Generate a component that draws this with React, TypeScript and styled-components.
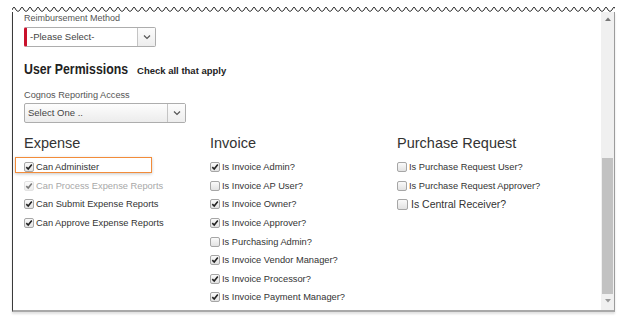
import React from "react";
import styled, { createGlobalStyle } from "styled-components";

const GlobalStyle = createGlobalStyle`
  html, body { margin: 0; padding: 0; background: #ffffff; }
  body { font-family: "Liberation Sans", Arial, sans-serif; color: #333; }
  * { box-sizing: border-box; }
`;

const Page = styled.div`
  width: 625px;
  height: 323px;
  padding: 4px 0 0 12px;
  overflow: hidden;
`;

const Frame = styled.div`
  width: 603px;
  display: flex;
  flex-direction: column;
`;

const WaveSvg = styled.svg`
  display: block;
  width: 603px;
  height: 8px;
`;

const Panel = styled.div`
  display: flex;
  height: 300px;
  border-left: 1px solid #3a3a3a;
  border-right: 1px solid #9c9c9c;
  border-bottom: 2px solid #a9a9a9;
  box-shadow: 0 2px 2px rgba(0, 0, 0, 0.12);
  background: #fff;
`;

const Content = styled.div`
  flex: 1;
  padding-left: 11px;
  overflow: hidden;
`;

const FieldLabel = styled.div<{ $size: number; $mt?: number }>`
  font-size: ${(p) => p.$size}px;
  line-height: 12px;
  color: #555;
  margin-top: ${(p) => p.$mt ?? 0}px;
  white-space: nowrap;
`;

const SelectBox = styled.div<{ $w: number; $required?: boolean; $mt: number }>`
  display: flex;
  width: ${(p) => p.$w}px;
  height: 20px;
  margin-top: ${(p) => p.$mt}px;
  border: 1px solid #adadad;
  border-left: ${(p) => (p.$required ? "3px solid #c9112c" : "1px solid #adadad")};
  border-radius: 2px;
  background: ${(p) =>
    p.$required ? "#ffffff" : "linear-gradient(#fdfdfd, #ececec)"};
`;

const SelectText = styled.div<{ $pad: number }>`
  flex: 1;
  padding-left: ${(p) => p.$pad}px;
  font-size: 9.5px;
  line-height: 18px;
  color: #444;
  white-space: nowrap;
`;

const SelectArrow = styled.div`
  width: 18px;
  border-left: 1px solid #c4c4c4;
  display: flex;
  align-items: center;
  justify-content: center;
  background: linear-gradient(#fcfcfc, #ededed);
`;

const HeadingRow = styled.div`
  display: flex;
  align-items: baseline;
  height: 18px;
  line-height: 18px;
  margin-top: 13px;
  white-space: nowrap;
`;

const Heading = styled.h2`
  display: inline-block;
  margin: 0 -22.7px 0 0;
  font-size: 15px;
  font-weight: bold;
  color: #222;
  transform: scaleX(0.821);
  transform-origin: left center;
`;

const HeadingNote = styled.span`
  margin-left: 9px;
  font-size: 9.5px;
  font-weight: bold;
  color: #222;
`;

const Columns = styled.div`
  display: grid;
  grid-template-columns: 186px 187px 1fr;
  margin-top: 11px;
`;

const Column = styled.div`
  display: flex;
  flex-direction: column;
`;

const ColumnTitle = styled.h3`
  margin: 0 0 6px 0;
  font-size: 14.5px;
  line-height: 18px;
  font-weight: normal;
  color: #333;
  white-space: nowrap;
`;

const Row = styled.div<{ $disabled?: boolean; $large?: boolean }>`
  position: relative;
  display: flex;
  align-items: center;
  gap: ${(p) => (p.$large ? 3 : 2)}px;
  height: 18.6px;
  font-size: ${(p) => (p.$large ? 10.5 : 9.3)}px;
  color: ${(p) => (p.$disabled ? "#a8a8a8" : "#333")};
  white-space: nowrap;
`;

const Box = styled.span<{ $disabled?: boolean; $large?: boolean }>`
  display: flex;
  align-items: center;
  justify-content: center;
  width: ${(p) => (p.$large ? 11 : 10)}px;
  height: ${(p) => (p.$large ? 11 : 10)}px;
  border: 1px solid ${(p) => (p.$disabled ? "#cfcfcf" : "#a6a6a6")};
  border-radius: 2px;
  background: linear-gradient(#fafafa, #e2e2e2);
  opacity: ${(p) => (p.$disabled ? 0.6 : 1)};
`;

const Highlight = styled.div`
  position: absolute;
  left: -9px;
  top: -1px;
  width: 137px;
  height: 16px;
  border: 1.5px solid #f28c3a;
  box-shadow: 0 1px 3px rgba(0, 0, 0, 0.22);
  pointer-events: none;
`;

const Scrollbar = styled.div`
  width: 13px;
  display: flex;
  flex-direction: column;
  background: #f0f0f0;
`;

const ScrollButton = styled.div`
  height: 14px;
  display: flex;
  align-items: center;
  justify-content: center;
`;

const TrackSpace = styled.div`
  height: 132px;
`;

const Thumb = styled.div`
  height: 136px;
  margin: 0 1px;
  background: #c2c2c2;
`;

type Item = { label: string; checked: boolean; disabled?: boolean; large?: boolean; highlight?: boolean };

const expense: Item[] = [
  { label: "Can Administer", checked: true, highlight: true },
  { label: "Can Process Expense Reports", checked: true, disabled: true },
  { label: "Can Submit Expense Reports", checked: true },
  { label: "Can Approve Expense Reports", checked: true },
];

const invoice: Item[] = [
  { label: "Is Invoice Admin?", checked: true },
  { label: "Is Invoice AP User?", checked: false },
  { label: "Is Invoice Owner?", checked: true },
  { label: "Is Invoice Approver?", checked: true },
  { label: "Is Purchasing Admin?", checked: false },
  { label: "Is Invoice Vendor Manager?", checked: true },
  { label: "Is Invoice Processor?", checked: true },
  { label: "Is Invoice Payment Manager?", checked: true },
];

const purchase: Item[] = [
  { label: "Is Purchase Request User?", checked: false },
  { label: "Is Purchase Request Approver?", checked: false },
  { label: "Is Central Receiver?", checked: false, large: true },
];

const wavePath = (() => {
  let d = "M0 6";
  for (let i = 0; i < 76; i++) d += " q2 -5.5 4 0 q2 3 4 0";
  return d;
})();

const Wave = () => (
  <WaveSvg viewBox="0 0 603 8" preserveAspectRatio="none">
    <path d={wavePath} fill="none" stroke="#333" strokeWidth="1" />
  </WaveSvg>
);

const Chevron = () => (
  <svg width="8" height="6" viewBox="0 0 8 6">
    <path d="M1 1.5 L4 4.5 L7 1.5" fill="none" stroke="#555" strokeWidth="1.2" />
  </svg>
);

const CheckMark = () => (
  <svg width="8" height="8" viewBox="0 0 8 8">
    <path d="M1.3 4.2 L3.2 6 L6.8 1.6" fill="none" stroke="#222" strokeWidth="1.6" />
  </svg>
);

const Check = ({ item }: { item: Item }) => (
  <Row $disabled={item.disabled} $large={item.large}>
    <Box $disabled={item.disabled} $large={item.large}>
      {item.checked && <CheckMark />}
    </Box>
    <span>{item.label}</span>
    {item.highlight && <Highlight />}
  </Row>
);

const Group = ({ title, items }: { title: string; items: Item[] }) => (
  <Column>
    <ColumnTitle>{title}</ColumnTitle>
    {items.map((it) => (
      <Check key={it.label} item={it} />
    ))}
  </Column>
);

export default function App() {
  return (
    <>
      <GlobalStyle />
      <Page>
        <Frame>
          <Wave />
          <Panel>
            <Content>
              <FieldLabel $size={9}>Reimbursement Method</FieldLabel>
              <SelectBox $w={132} $required $mt={3}>
                <SelectText $pad={3}>-Please Select-</SelectText>
                <SelectArrow>
                  <Chevron />
                </SelectArrow>
              </SelectBox>
              <HeadingRow>
                <Heading>User Permissions</Heading>
                <HeadingNote>Check all that apply</HeadingNote>
              </HeadingRow>
              <FieldLabel $size={9.2} $mt={11}>
                Cognos Reporting Access
              </FieldLabel>
              <SelectBox $w={162} $mt={2}>
                <SelectText $pad={3}>Select One ..</SelectText>
                <SelectArrow>
                  <Chevron />
                </SelectArrow>
              </SelectBox>
              <Columns>
                <Group title="Expense" items={expense} />
                <Group title="Invoice" items={invoice} />
                <Group title="Purchase Request" items={purchase} />
              </Columns>
            </Content>
            <Scrollbar>
              <ScrollButton>
                <svg width="6" height="4" viewBox="0 0 6 4">
                  <path d="M0 4 L3 0.5 L6 4 Z" fill="#777" />
                </svg>
              </ScrollButton>
              <TrackSpace />
              <Thumb />
              <ScrollButton>
                <svg width="6" height="4" viewBox="0 0 6 4">
                  <path d="M0 0 L3 3.5 L6 0 Z" fill="#999" />
                </svg>
              </ScrollButton>
            </Scrollbar>
          </Panel>
        </Frame>
      </Page>
    </>
  );
}
